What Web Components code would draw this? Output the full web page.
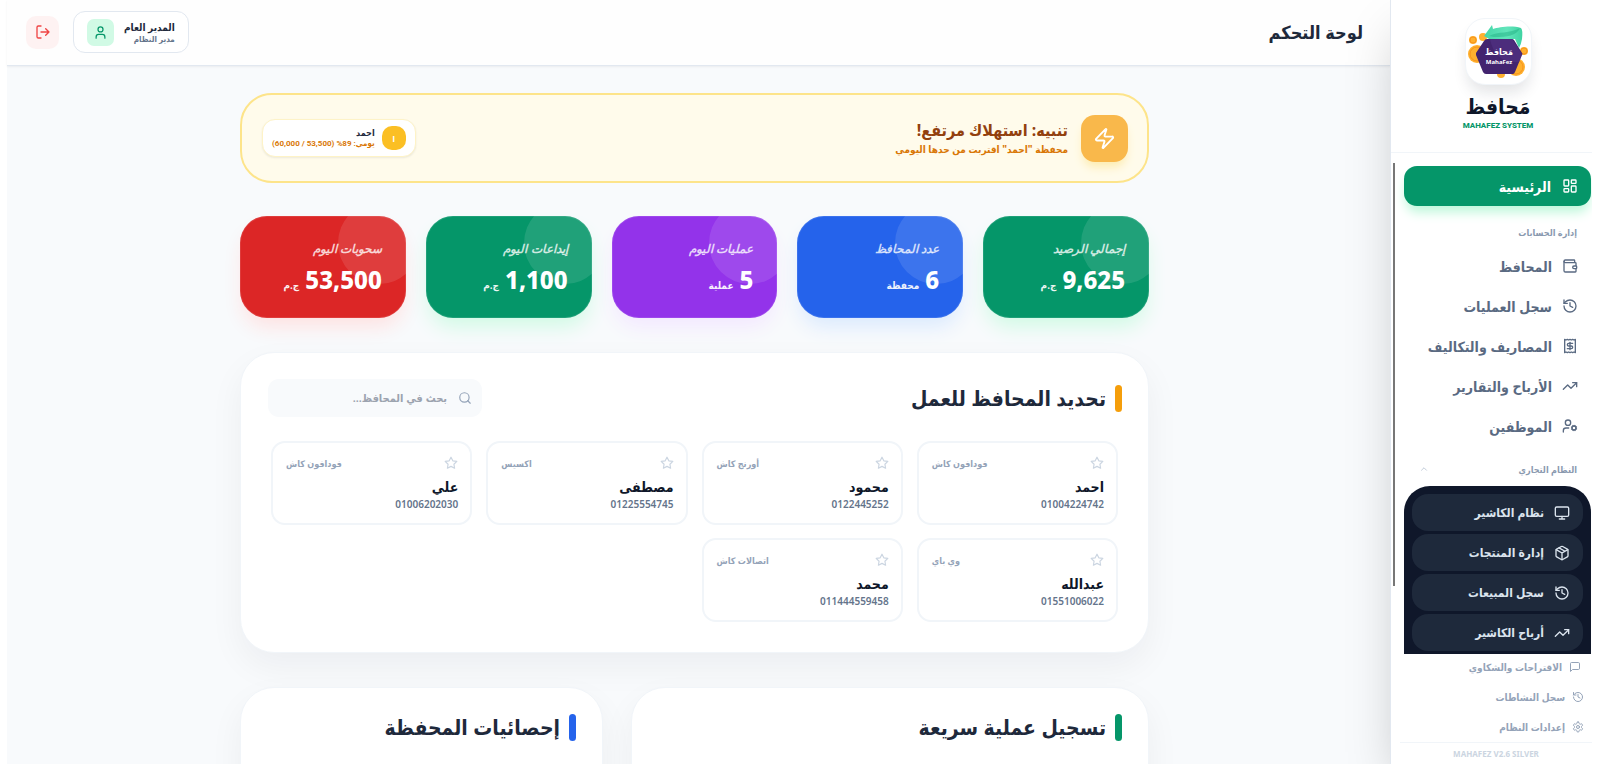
<!DOCTYPE html>
<html lang="ar" dir="rtl">
<head>
<meta charset="utf-8">
<meta name="viewport" content="width=device-width, initial-scale=1">
<title>لوحة التحكم</title>
<style>
html, body { margin: 0; height: 100%; overflow: hidden; background: #fff; }
body { font-family: "Noto Sans", "DejaVu Sans Condensed", "DejaVu Sans", sans-serif; color: #1e293b; }
</style>
</head>
<body>
<mz-app></mz-app>
<script>
const ICONS = {
  dashboard: '<rect width="7" height="9" x="3" y="3" rx="1"/><rect width="7" height="5" x="14" y="3" rx="1"/><rect width="7" height="9" x="14" y="12" rx="1"/><rect width="7" height="5" x="3" y="16" rx="1"/>',
  wallet: '<path d="M19 7V4a1 1 0 0 0-1-1H5a2 2 0 0 0 0 4h15a1 1 0 0 1 1 1v4h-3a2 2 0 0 0 0 4h3a1 1 0 0 0 1-1v-2a1 1 0 0 0-1-1"/><path d="M3 5v14a2 2 0 0 0 2 2h15a1 1 0 0 0 1-1v-4"/>',
  history: '<path d="M3 12a9 9 0 1 0 9-9 9.75 9.75 0 0 0-6.74 2.74L3 8"/><path d="M3 3v5h5"/><path d="M12 7v5l4 2"/>',
  receipt: '<path d="M4 2v20l2-1 2 1 2-1 2 1 2-1 2 1 2-1 2 1V2l-2 1-2-1-2 1-2-1-2 1-2-1-2 1Z"/><path d="M16 8h-6a2 2 0 1 0 0 4h4a2 2 0 1 1 0 4H8"/><path d="M12 17.5v-11"/>',
  trend: '<path d="M22 7 13.5 15.5 8.5 10.5 2 17"/><path d="M16 7h6v6"/>',
  staff: '<circle cx="18" cy="15" r="3"/><circle cx="9" cy="7" r="4"/><path d="M10 15H6a4 4 0 0 0-4 4v2"/><path d="m21.7 16.4-.9-.3M15.2 13.9l-.9-.3M16.6 18.7l.3-.9M19.1 12.2l.3-.9M19.6 18.7l-.4-1M16.8 12.3l-.4-1M14.3 16.6l1-.4M20.7 13.8l1-.4"/>',
  chevron: '<path d="m18 15-6-6-6 6"/>',
  monitor: '<rect width="20" height="14" x="2" y="3" rx="2"/><path d="M8 21h8M12 17v4"/>',
  package: '<path d="M11 21.73a2 2 0 0 0 2 0l7-4A2 2 0 0 0 21 16V8a2 2 0 0 0-1-1.73l-7-4a2 2 0 0 0-2 0l-7 4A2 2 0 0 0 3 8v8a2 2 0 0 0 1 1.73z"/><path d="M12 22V12M3.3 7l8.7 5 8.7-5M7.5 4.27l9 5.15"/>',
  message: '<path d="M21 15a2 2 0 0 1-2 2H7l-4 4V5a2 2 0 0 1 2-2h14a2 2 0 0 1 2 2z"/>',
  settings: '<path d="M12.22 2h-.44a2 2 0 0 0-2 2v.18a2 2 0 0 1-1 1.73l-.43.25a2 2 0 0 1-2 0l-.15-.08a2 2 0 0 0-2.73.73l-.22.38a2 2 0 0 0 .73 2.73l.15.1a2 2 0 0 1 1 1.72v.51a2 2 0 0 1-1 1.74l-.15.09a2 2 0 0 0-.73 2.73l.22.38a2 2 0 0 0 2.73.73l.15-.08a2 2 0 0 1 2 0l.43.25a2 2 0 0 1 1 1.73V20a2 2 0 0 0 2 2h.44a2 2 0 0 0 2-2v-.18a2 2 0 0 1 1-1.73l.43-.25a2 2 0 0 1 2 0l.15.08a2 2 0 0 0 2.73-.73l.22-.39a2 2 0 0 0-.73-2.73l-.15-.08a2 2 0 0 1-1-1.74v-.5a2 2 0 0 1 1-1.74l.15-.09a2 2 0 0 0 .73-2.73l-.22-.38a2 2 0 0 0-2.73-.73l-.15.08a2 2 0 0 1-2 0l-.43-.25a2 2 0 0 1-1-1.73V4a2 2 0 0 0-2-2z"/><circle cx="12" cy="12" r="3"/>',
  user: '<path d="M19 21v-2a4 4 0 0 0-4-4H9a4 4 0 0 0-4 4v2"/><circle cx="12" cy="7" r="4"/>',
  logout: '<path d="M9 21H5a2 2 0 0 1-2-2V5a2 2 0 0 1 2-2h4"/><path d="m16 17 5-5-5-5M21 12H9"/>',
  zap: '<path d="M4 14a1 1 0 0 1-.78-1.63l9.9-10.2a.5.5 0 0 1 .86.46l-1.92 6.02A1 1 0 0 0 13 10h7a1 1 0 0 1 .78 1.63l-9.9 10.2a.5.5 0 0 1-.86-.46l1.92-6.02A1 1 0 0 0 11 14z"/>',
  star: '<path d="m12 2 3.09 6.26L22 9.27l-5 4.87 1.18 6.88L12 17.77l-6.18 3.25L7 14.14 2 9.27l6.91-1.01L12 2z"/>',
  search: '<circle cx="11" cy="11" r="8"/><path d="m21 21-4.3-4.3"/>'
};

const define = (name, render) => customElements.define(name, class extends HTMLElement {
  connectedCallback() {
    if (this.shadowRoot) return;
    const template = document.createElement('template');
    template.innerHTML = '<style>*{box-sizing:border-box}h1,h2,p{margin:0}</style>' + render(n => this.getAttribute(n) || '', this);
    this.attachShadow({ mode: 'open' }).append(template.content.cloneNode(true));
  }
});

define('mz-icon', a => `
<style>
:host { display: block; flex: none; width: 16px; height: 16px; }
svg { display: block; width: 100%; height: 100%; fill: none; stroke: currentColor; stroke-width: 2; stroke-linecap: round; stroke-linejoin: round; }
</style>
<svg viewBox="0 0 24 24" aria-hidden="true">${ICONS[a('name')]}</svg>`);

define('mz-logo', () => `
<style>
:host { display: block; flex: none; width: 67px; height: 67px; border-radius: 20px; background: #fff; border: 1px solid #f1f5f9; box-sizing: border-box; box-shadow: 0 10px 15px -3px rgba(15,23,42,.12); }
svg { display: block; width: 65px; height: 65px; }
.ar { font: bold 9px "DejaVu Sans Condensed", "DejaVu Sans", sans-serif; }
.en { font: bold 6px "Noto Sans", sans-serif; }
</style>
<svg viewBox="1 1 65 65" role="img" aria-label="Mahafez">
<defs><linearGradient id="g" x1="0" x2="1"><stop offset="0" stop-color="#45d6a8"/><stop offset=".6" stop-color="#62e5bb"/><stop offset="1" stop-color="#3fd3a2"/></linearGradient></defs>
<g fill="#ffb02e"><circle cx="8" cy="22" r="4"/><circle cx="18" cy="19" r="4"/><circle cx="12" cy="36" r="9"/><circle cx="59" cy="33" r="4"/><circle cx="51" cy="49" r="9"/><circle cx="36" cy="56" r="4"/></g>
<g fill="none" stroke="#f7951d"><circle cx="12" cy="36" r="7"/><circle cx="51" cy="49" r="7"/><circle cx="8" cy="22" r="3"/><circle cx="59" cy="33" r="3"/></g>
<path d="M19 18 27 7l1 4c6-2 19-4 28-1q2 2 1 11-1 6-3 9l-4-9-20 0 1 4z" fill="url(#g)"/>
<path d="M24 18c9-5 21-2 31-8-4 8-12 9-26 9z" fill="#1fae80" opacity=".45"/>
<path d="M22 21h25q1 0 2 1l8 13q1 1 0 2l-7 17q-1 2-2 2H21q-2 0-3-2l-7-17q0-1 0-2l8-12q1-2 3-2z" fill="#43246f"/>
<path d="m47 21 10 15-3 8q-24 2-29-23z" fill="#55358a" opacity=".5"/>
<g fill="#fff" text-anchor="middle"><text class="ar" x="34" y="37">مَحافظ</text><text class="en" x="34" y="46">MahaFez</text></g>
</svg>`);

define('mz-nav-item', a => `
<style>
:host { display: block; }
a { display: flex; align-items: center; gap: 10px; height: 40px; padding-inline: 13px; border-radius: 13px; color: #5a6a82; text-decoration: none; font-size: 14px; font-weight: 600; white-space: nowrap; }
:host([kind="active"]) a { gap: 11px; background: #059669; color: #fff; box-shadow: 0 8px 12px -2px #bbf7d9; }
:host([kind="dark"]) a { height: 37px; background: #1e293b; color: #dbe4ee; border-radius: 16px; font-size: 12px; }
:host([kind="small"]) a { height: 30px; gap: 7px; padding-inline: 8px; color: #94a3b8; font-size: 10px; }
:host([kind="small"].first) a { height: 26px; }
:host([kind="small"]) mz-icon { width: 12px; height: 12px; }
</style>
<a href="#"><mz-icon name="${a('icon')}"></mz-icon><slot></slot></a>`);

define('mz-sidebar', () => `
<style>
:host { display: flex; flex-direction: column; flex: none; width: 202px; height: 100%; box-sizing: border-box; background: #fff; border-inline-end: 1px solid #e2e8f0; box-shadow: 0 25px 50px -12px rgba(0,0,0,.25); position: relative; z-index: 2; clip-path: inset(0 0 0 -60px); }
header { display: flex; flex-direction: column; align-items: center; height: 153px; flex: none; padding-top: 18px; padding-inline-start: 47px; padding-inline-end: 60px; border-bottom: 1px solid #f1f5f9; }
header h1 { font-size: 21px; line-height: 24px; margin-top: 9px; color: #0f172a; white-space: nowrap; }
header p { font: 800 8px/12px Roboto, sans-serif; margin-top: 2px; color: #059669; white-space: nowrap; }
.scroll { display: flex; flex: 1; min-height: 0; margin-top: 10px; }
nav { flex: 1; overflow: hidden; padding: 3px 1px 0 9px; }
.thumb { width: 2px; margin-inline-end: 2px; height: 423px; background: #777; }
.group { display: flex; align-items: center; justify-content: space-between; padding-inline: 14px 15px; height: 16px; font-size: 9px; color: #8a99af; font-weight: 600; }
.group mz-icon { width: 10px; height: 10px; color: #b6c2d1; }
.one { margin: 18px 0 6px; }
.two { margin: 15px 0 9px; }
.pos { display: grid; gap: 3px; padding: 8px 8px 40px; background: #0f172a; border-radius: 26px; }
.version { margin-right: 0; margin-left: 9px; border-top: 1px solid #f1f5f9; text-align: center; font-size: 8px; line-height: 21px; font-weight: 700; color: #cbd5e1; }
.first { padding-inline-start: 3px; height: 28px; }
</style>
<header><mz-logo></mz-logo><h1>مَحافظ</h1><p dir="ltr">MAHAFEZ SYSTEM</p></header>
<div class="scroll">
<nav>
<mz-nav-item kind="active" icon="dashboard">الرئيسية</mz-nav-item>
<div class="group one">إدارة الحسابات</div>
<mz-nav-item icon="wallet">المحافظ</mz-nav-item>
<mz-nav-item icon="history">سجل العمليات</mz-nav-item>
<mz-nav-item icon="receipt">المصاريف والتكاليف</mz-nav-item>
<mz-nav-item icon="trend">الأرباح والتقارير</mz-nav-item>
<mz-nav-item icon="staff">الموظفين</mz-nav-item>
<div class="group two">النظام التجاري<mz-icon name="chevron"></mz-icon></div>
<div class="pos">
<mz-nav-item kind="dark" icon="monitor">نظام الكاشير</mz-nav-item>
<mz-nav-item kind="dark" icon="package">إدارة المنتجات</mz-nav-item>
<mz-nav-item kind="dark" icon="history">سجل المبيعات</mz-nav-item>
<mz-nav-item kind="dark" icon="trend">أرباح الكاشير</mz-nav-item>
</div>
</nav>
<div class="thumb"></div>
</div>
<footer>
<mz-nav-item class="first" kind="small" icon="message">الاقتراحات والشكاوي</mz-nav-item>
<mz-nav-item kind="small" icon="history">سجل النشاطات</mz-nav-item>
<mz-nav-item kind="small" icon="settings">إعدادات النظام</mz-nav-item>
<div class="version" dir="ltr">MAHAFEZ V2.6 SILVER</div>
</footer>`);

define('mz-topbar', () => `
<style>
:host { display: flex; align-items: center; justify-content: space-between; flex: none; height: 66px; box-sizing: border-box; padding-inline: 27px 19px; padding-bottom: 1px; background: #fefefe; border-bottom: 1px solid #e2e8f0; box-shadow: 0 1px 2px rgba(15,23,42,.06); }
h1 { font-size: 18px; line-height: 28px; color: #1e293b; }
.tools { display: flex; align-items: center; gap: 14px; }
.profile { display: flex; align-items: center; gap: 10px; height: 42px; padding-inline: 13px; border: 1px solid #e2e8f0; border-radius: 12px; background: #fff; text-align: start; }
.profile div { white-space: nowrap; }
.profile p { font-size: 8px; line-height: 11px; color: #64748b; font-weight: 600; }
.profile p.name { font-size: 10px; line-height: 12px; font-weight: 700; color: #1e293b; }
.avatar { display: grid; place-items: center; width: 27px; height: 27px; border-radius: 7px; background: #d1fae5; color: #059669; }
.avatar mz-icon { width: 15px; height: 15px; }
button { display: grid; place-items: center; width: 33px; height: 33px; padding: 0; border: 0; border-radius: 10px; background: #fef2f2; color: #ef4444; }
</style>
<h1>لوحة التحكم</h1>
<div class="tools">
<div class="profile"><div><p class="name">المدير العام</p><p>مدير النظام</p></div><span class="avatar"><mz-icon name="user"></mz-icon></span></div>
<button type="button" aria-label="تسجيل الخروج"><mz-icon name="logout"></mz-icon></button>
</div>`);

define('mz-alert', () => `
<style>
:host { display: flex; align-items: center; justify-content: space-between; height: 90px; box-sizing: border-box; padding-inline: 19px 20px; background: #fffbeb; border: 2px solid #fde48a; border-radius: 32px; white-space: nowrap; }
.lead, .chip { display: flex; align-items: center; }
.lead { gap: 13px; }
.badge { display: grid; place-items: center; width: 47px; height: 47px; border-radius: 14px; background: #f9b84b; color: #fff; box-shadow: 0 7px 10px -2px #fdecb0; }
.badge mz-icon { width: 23px; height: 23px; }
h2 { font-size: 16px; line-height: 22px; color: #92400e; }
.lead p { font-size: 10px; line-height: 17px; font-weight: 700; color: #d97706; }
.chip { gap: 7px; height: 38px; padding-inline: 9px; background: #fff; border: 1px solid #fef3c7; border-radius: 13px; box-shadow: 0 1px 2px rgba(15,23,42,.08); }
.initial { display: grid; place-items: center; width: 24px; height: 24px; border-radius: 10px; background: #fbbf24; color: #fff; font-size: 8px; font-weight: 700; }
.chip p { font: 700 8px/10px Roboto, "DejaVu Sans Condensed", "DejaVu Sans", sans-serif; color: #d97706; }
.chip p.name { font-size: 9px; line-height: 11px; color: #1e293b; }
</style>
<div class="lead"><span class="badge"><mz-icon name="zap"></mz-icon></span><div><h2>تنبيه: استهلاك مرتفع!</h2><p>محفظة "احمد" اقتربت من حدها اليومي</p></div></div>
<div class="chip"><span class="initial">ا</span><div><p class="name">احمد</p><p>يومي: 89% <bdi dir="ltr">(60,000 / 53,500)</bdi></p></div></div>`);

define('mz-stat', a => `
<style>
:host { display: block; height: 102px; box-sizing: border-box; padding: 22px 24px 0; border-radius: 27px; background: var(--fill); color: #fff; position: relative; box-shadow: 0 12px 20px -3px var(--glow), inset 0 0 0 1px rgba(255,255,255,.1); white-space: nowrap; }
.clip { position: absolute; inset: 0; border-radius: inherit; overflow: hidden; }
.clip::before { content: ""; position: absolute; top: -14px; right: -14px; width: 82px; height: 82px; border-radius: 50%; background: rgba(255,255,255,.11); }
p { position: relative; }
.label { font-size: 12px; line-height: 22px; font-style: italic; font-weight: 600; color: rgba(255,255,255,.78); }
.value { display: flex; align-items: baseline; gap: 6px; font-size: 24px; line-height: 40px; font-weight: 800; }
small { font-size: 10px; font-weight: 600; opacity: .92; }
</style>
<div class="clip"></div>
<p class="label">${a('label')}</p><p class="value"><span>${a('value')}</span><small>${a('unit')}</small></p>`);

define('mz-panel', () => `
<style>
:host { display: block; box-sizing: border-box; padding: 26px 26px 30px 27px; background: #fff; border: 1px solid #f1f5f9; border-radius: 34px; box-shadow: 0 14px 34px rgba(15,23,42,.05); }
header { display: flex; align-items: center; justify-content: space-between; min-height: 27px; }
h2 { display: flex; align-items: center; gap: 9px; font-size: 21px; line-height: 27px; color: #1e293b; white-space: nowrap; }
h2::before { content: ""; width: 7px; height: 27px; border-radius: 4px; background: var(--accent); }
</style>
<header><h2><slot name="title"></slot></h2><slot name="action"></slot></header>
<slot></slot>`);

define('mz-search', () => `
<style>
:host { display: block; width: 214px; }
label { display: flex; align-items: center; gap: 11px; height: 38px; padding-inline: 10px 12px; border-radius: 11px; background: #f8fafc; color: #94a3b8; }
mz-icon { width: 14px; height: 14px; }
input { flex: 1; min-width: 0; padding: 0; border: 0; outline: 0; background: none; font: 600 11px/20px "Noto Sans", "DejaVu Sans Condensed", "DejaVu Sans", sans-serif; color: #1e293b; }
input::placeholder { color: #9ca3af; opacity: 1; }
</style>
<label><mz-icon name="search"></mz-icon><input type="text" aria-label="بحث في المحافظ" placeholder="بحث في المحافظ..."></label>`);

define('mz-wallet', a => `
<style>
:host { display: block; height: 84px; box-sizing: border-box; padding: 13px 12px 0 13px; background: #fff; border: 2px solid #f1f5f9; border-radius: 14px; white-space: nowrap; }
div { display: flex; align-items: center; justify-content: space-between; height: 14px; font-size: 9px; font-weight: 600; color: #94a3b8; }
button { padding: 0; border: 0; background: none; color: #cbd5e1; }
mz-icon { width: 14px; height: 14px; }
h2 { font-size: 14px; line-height: 20px; margin-top: 7px; color: #0f172a; }
p { font-size: 10px; line-height: 14px; font-weight: 600; color: #64748b; }
</style>
<div><button type="button" aria-label="تفضيل"><mz-icon name="star"></mz-icon></button><span>${a('bank')}</span></div>
<h2>${a('name')}</h2><p><bdi dir="ltr">${a('number')}</bdi></p>`);

define('mz-app', () => `
<style>
:host { display: flex; height: 100vh; padding-inline: 8px 7px; box-sizing: border-box; overflow: hidden; }
.page { display: flex; flex-direction: column; flex: 1; min-width: 0; background: #f8fafc; }
main { flex: 1; min-height: 0; overflow: hidden; padding: 27px 35px 0 27px; }
.content { max-width: 909px; margin: 0 auto; }
.stats { display: grid; grid-template-columns: repeat(5, 1fr); gap: 20px; margin: 33px 0 34px; }
.green { --fill: #059669; --glow: #d1fae5; }
.blue { --fill: #2563eb; --glow: #dbeafe; }
.purple { --fill: #9333ea; --glow: #f3e8ff; }
.red { --fill: #dc2626; --glow: #fee2e2; }
.wallets { display: grid; grid-template-columns: repeat(4, 1fr); gap: 13px 14px; padding: 24px 4px 0 3px; }
.bottom { display: grid; grid-template-columns: 518fr 363fr; gap: 28px; margin-top: 34px; }
.bottom mz-panel { min-height: 320px; }
.amber-bar { --accent: #f59e0b; }
.green-bar { --accent: #059669; }
.blue-bar { --accent: #2563eb; }
</style>
<mz-sidebar></mz-sidebar>
<div class="page">
<mz-topbar></mz-topbar>
<main><div class="content">
<mz-alert></mz-alert>
<div class="stats">
<mz-stat class="green" label="إجمالي الرصيد" value="9,625" unit="ج.م"></mz-stat>
<mz-stat class="blue" label="عدد المحافظ" value="6" unit="محفظة"></mz-stat>
<mz-stat class="purple" label="عمليات اليوم" value="5" unit="عملية"></mz-stat>
<mz-stat class="green" label="إيداعات اليوم" value="1,100" unit="ج.م"></mz-stat>
<mz-stat class="red" label="سحوبات اليوم" value="53,500" unit="ج.م"></mz-stat>
</div>
<mz-panel class="amber-bar"><span slot="title">تحديد المحافظ للعمل</span><mz-search slot="action"></mz-search>
<div class="wallets">
<mz-wallet bank="فودافون كاش" name="احمد" number="01004224742"></mz-wallet>
<mz-wallet bank="أورنج كاش" name="محمود" number="0122445252"></mz-wallet>
<mz-wallet bank="اكسيس" name="مصطفى" number="01225554745"></mz-wallet>
<mz-wallet bank="فودافون كاش" name="علي" number="01006202030"></mz-wallet>
<mz-wallet bank="وي باي" name="عبدالله" number="01551006022"></mz-wallet>
<mz-wallet bank="اتصالات كاش" name="محمد" number="011444559458"></mz-wallet>
</div></mz-panel>
<div class="bottom">
<mz-panel class="green-bar"><span slot="title">تسجيل عملية سريعة</span></mz-panel>
<mz-panel class="blue-bar"><span slot="title">إحصائيات المحفظة</span></mz-panel>
</div>
</div></main>
</div>`);
</script>
</body>
</html>
